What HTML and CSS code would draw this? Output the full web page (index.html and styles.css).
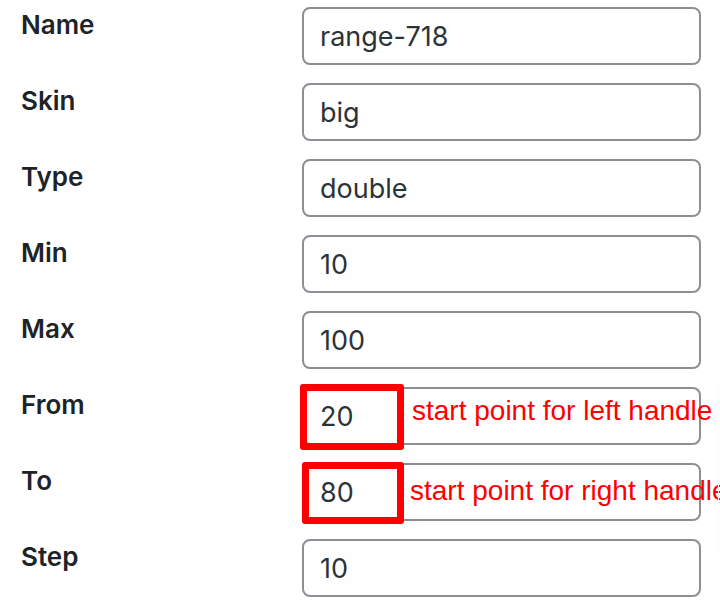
FILE: index.html
```html
<!DOCTYPE html>
<html lang="en">
<head>
    <meta charset="UTF-8">
    <meta name="viewport" content="width=device-width, initial-scale=1.0">
    <title>Range slider settings</title>
    <link rel="stylesheet" href="styles.css">
</head>
<body>
    <form class="settings-form">
        <label class="field-label" for="fName">Name</label>
        <div class="field"><input class="field-input" id="fName" type="text" value="range-718"></div>

        <label class="field-label" for="fSkin">Skin</label>
        <div class="field"><input class="field-input" id="fSkin" type="text" value="big"></div>

        <label class="field-label" for="fType">Type</label>
        <div class="field"><input class="field-input" id="fType" type="text" value="double"></div>

        <label class="field-label" for="fMin">Min</label>
        <div class="field"><input class="field-input" id="fMin" type="text" value="10"></div>

        <label class="field-label" for="fMax">Max</label>
        <div class="field"><input class="field-input" id="fMax" type="text" value="100"></div>

        <label class="field-label" for="fFrom">From</label>
        <div class="field">
            <input class="field-input" id="fFrom" type="text" value="20">
            <span class="mark mark-from"></span>
            <span class="note note-from">start point for left handle</span>
        </div>

        <label class="field-label" for="fTo">To</label>
        <div class="field">
            <input class="field-input" id="fTo" type="text" value="80">
            <span class="mark mark-to"></span>
            <span class="note note-to">start point for right handle</span>
        </div>

        <label class="field-label" for="fStep">Step</label>
        <div class="field"><input class="field-input" id="fStep" type="text" value="10"></div>
    </form>
    <div class="edge-line"></div>
</body>
</html>
```

FILE: styles.css
```css
:root {
    --label-color: #1d2327;
    --text-color: #2c3338;
    --border-color: #8c8f94;
    --mark-color: #ff0000;
}

* {
    box-sizing: border-box;
}

body {
    margin: 0;
    background: #ffffff;
    font-family: Inter, "Noto Sans", sans-serif;
    overflow: hidden;
}

.settings-form {
    display: grid;
    grid-template-columns: 281px 399px;
    row-gap: 18px;
    padding: 7px 0 0 21px;
}

.field-label {
    font-weight: 600;
    font-size: 26px;
    line-height: 1;
    color: var(--label-color);
    padding-top: 5px;
}

.field {
    position: relative;
    height: 58px;
}

.field-input {
    width: 100%;
    height: 58px;
    margin: 0;
    padding: 0 16px;
    border: 2px solid var(--border-color);
    border-radius: 8px;
    background: #ffffff;
    font-family: Inter, "Noto Sans", sans-serif;
    font-size: 27px;
    color: var(--text-color);
    outline: none;
}

/* red annotation boxes drawn over the screenshot */
.mark {
    position: absolute;
    border: 7px solid var(--mark-color);
    border-radius: 3px;
}

.mark-from {
    left: -2px;
    top: -3px;
    width: 104px;
    height: 66px;
}

.mark-to {
    left: 0;
    top: -1px;
    width: 102px;
    height: 62px;
}

.note {
    position: absolute;
    font-family: "Liberation Sans", Arial, sans-serif;
    font-size: 28px;
    color: var(--mark-color);
    white-space: nowrap;
    line-height: 1;
}

.note-from {
    left: 110px;
    top: 10px;
}

.note-to {
    left: 108px;
    top: 14px;
}

.edge-line {
    position: absolute;
    left: 718px;
    top: 385px;
    width: 1px;
    height: 168px;
    background: #f8f8f8;
}
```
